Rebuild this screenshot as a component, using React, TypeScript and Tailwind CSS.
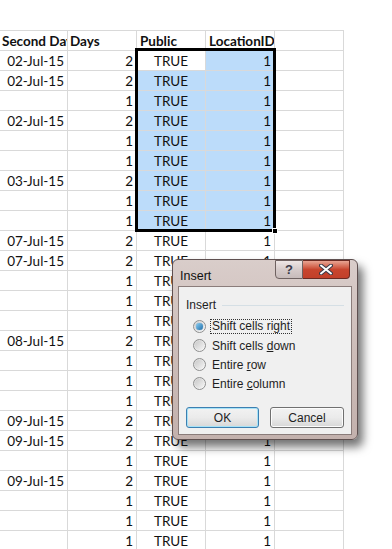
type Row = { date: string; days: number };

const rows: Row[] = [
  { date: "02-Jul-15", days: 2 },
  { date: "02-Jul-15", days: 2 },
  { date: "", days: 1 },
  { date: "02-Jul-15", days: 2 },
  { date: "", days: 1 },
  { date: "", days: 1 },
  { date: "03-Jul-15", days: 2 },
  { date: "", days: 1 },
  { date: "", days: 1 },
  { date: "07-Jul-15", days: 2 },
  { date: "07-Jul-15", days: 2 },
  { date: "", days: 1 },
  { date: "", days: 1 },
  { date: "", days: 1 },
  { date: "08-Jul-15", days: 2 },
  { date: "", days: 1 },
  { date: "", days: 1 },
  { date: "", days: 1 },
  { date: "09-Jul-15", days: 2 },
  { date: "09-Jul-15", days: 2 },
  { date: "", days: 1 },
  { date: "09-Jul-15", days: 2 },
  { date: "", days: 1 },
  { date: "", days: 1 },
  { date: "", days: 1 },
];

const cell = "h-full shrink-0 border-r border-[#d9d9d9] overflow-hidden whitespace-nowrap";

function Radio({ checked }: { checked?: boolean }) {
  return (
    <span className="flex h-[13px] w-[13px] items-center justify-center rounded-full border border-[#8e8f8f] bg-gradient-to-br from-[#d6d6d6] to-[#fbfbfb]">
      {checked ? (
        <span className="h-[7px] w-[7px] rounded-full bg-gradient-to-br from-[#8ad0f5] to-[#1a6ea8] shadow-[0_0_1px_#0a4e80]" />
      ) : (
        <span className="h-[9px] w-[9px] rounded-full bg-gradient-to-br from-[#c9c9c9] to-[#f4f4f4]" />
      )}
    </span>
  );
}

function InsertDialog() {
  return (
    <div className="absolute left-[172px] top-[259px] h-[181px] w-[186px] rounded-[6px] border border-[#5f5050] bg-gradient-to-b from-[#d9cdca] via-[#cdbdb9] to-[#c3b1ad] shadow-[5px_7px_10px_rgba(0,0,0,0.55)] font-['Liberation_Sans',sans-serif] text-[12px] text-[#1e1e1e]">
      <div className="flex h-[25px] items-start">
        <span className="pl-[7px] pt-[8px] text-[12.5px] leading-[16px] text-[#101010]">Insert</span>
        <div className="ml-auto mr-[7px] flex">
          <div className="flex h-[19px] w-[28px] items-center justify-center rounded-bl-[4px] border border-[#6f6261] bg-gradient-to-b from-[#eee6e5] via-[#d6cbca] to-[#c7bbba] text-[13px] font-bold text-[#3a3a4a]">
            ?
          </div>
          <div className="flex h-[19px] w-[47px] items-center justify-center rounded-br-[4px] border border-l-0 border-[#6b2a22] bg-gradient-to-b from-[#e8a493] via-[#c8452e] to-[#c2402a]">
            <svg width="14" height="11" viewBox="0 0 14 11">
              <path d="M2 1.5 L12 9.5 M12 1.5 L2 9.5" stroke="#3a3a48" strokeWidth="4" strokeLinecap="round" />
              <path d="M2 1.5 L12 9.5 M12 1.5 L2 9.5" stroke="#ffffff" strokeWidth="2" strokeLinecap="round" />
            </svg>
          </div>
        </div>
      </div>
      <div className="mx-[5px] mt-[1px] h-[149px] border border-[#8a7c7a] bg-[#f0f0f0] px-[7px] pt-[10px]">
        <div className="flex h-[16px] items-center">
          <span>Insert</span>
          <span className="ml-[6px] h-px flex-1 bg-[#d5dfe5]" />
        </div>
        <div className="mt-[4px] pl-[7px]">
          <div className="flex h-[19px] items-center">
            <Radio checked />
            <span className="ml-[4px] border border-dotted border-[#333] px-[1px] leading-[13px]">Shift cells right</span>
          </div>
          <div className="flex h-[19px] items-center">
            <Radio />
            <span className="ml-[6px]">
              Shift cells <span className="underline">d</span>own
            </span>
          </div>
          <div className="flex h-[19px] items-center">
            <Radio />
            <span className="ml-[6px]">
              Entire <span className="underline">r</span>ow
            </span>
          </div>
          <div className="flex h-[19px] items-center">
            <Radio />
            <span className="ml-[6px]">
              Entire <span className="underline">c</span>olumn
            </span>
          </div>
        </div>
        <div className="mt-[14px] flex">
          <button
            type="button"
            className="h-[21px] w-[73px] rounded-[3px] border border-[#3c7fb1] bg-gradient-to-b from-[#f2f2f2] via-[#ebebeb] to-[#d7d7d7] shadow-[inset_0_0_0_1px_#a6e2f7] text-[12px] text-[#1e1e1e]"
          >
            OK
          </button>
          <button
            type="button"
            className="ml-[11px] h-[21px] w-[74px] rounded-[3px] border border-[#707070] bg-gradient-to-b from-[#f2f2f2] via-[#ebebeb] to-[#d7d7d7] shadow-[inset_0_0_0_1px_#fcfcfc] text-[12px] text-[#1e1e1e]"
          >
            Cancel
          </button>
        </div>
      </div>
    </div>
  );
}

export default function App() {
  return (
    <div className="relative h-[549px] w-[392px] overflow-hidden bg-white font-['Lato',sans-serif] text-[13.5px] text-[#111]">
      <div className="h-[30px]" />
      <div className="w-[344px] border-t border-[#d9d9d9]">
        <div className="flex h-[20px] border-b border-[#d9d9d9] font-bold leading-[20px]">
          <div className={`${cell} w-[68px] pl-[2px]`}>Second Day</div>
          <div className={`${cell} w-[69px] pl-[2px]`}>Days</div>
          <div className={`${cell} w-[69px] pl-[3px]`}>Public</div>
          <div className={`${cell} w-[69px] pl-[3px]`}>LocationID</div>
          <div className={`${cell} w-[69px]`} />
        </div>
        {rows.map((r, i) => {
          const sel = i < 9;
          return (
            <div key={i} className="flex h-[20px] border-b border-[#d9d9d9] leading-[20px]">
              <div className={`${cell} w-[68px] pr-[3px] text-right`}>{r.date}</div>
              <div className={`${cell} w-[69px] pr-[3px] text-right`}>{r.days}</div>
              <div className={`${cell} w-[69px] text-center ${sel && i > 0 ? "bg-[#bcdcfa]" : ""}`}>TRUE</div>
              <div className={`${cell} w-[69px] pr-[3px] text-right ${sel ? "bg-[#bcdcfa]" : ""}`}>1</div>
              <div className={`${cell} w-[69px]`} />
            </div>
          );
        })}
      </div>

      {/* selection outline + fill handle */}
      <div className="pointer-events-none absolute left-[135px] top-[48px] h-[184px] w-[141px] border-[3px] border-black" />
      <div className="absolute left-[272px] top-[228px] h-[6px] w-[6px] border border-white bg-black" />

      <InsertDialog />
    </div>
  );
}
